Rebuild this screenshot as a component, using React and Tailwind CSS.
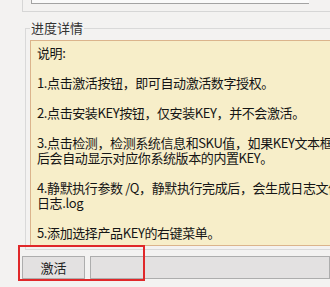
import React from 'react';

const lines = [
  '说明:',
  '',
  '1.点击激活按钮，即可自动激活数字授权。',
  '',
  '2.点击安装KEY按钮，仅安装KEY，并不会激活。',
  '',
  '3.点击检测，检测系统信息和SKU值，如果KEY文本框为空',
  '后会自动显示对应你系统版本的内置KEY。',
  '',
  '4.静默执行参数 /Q，静默执行完成后，会生成日志文件',
  '日志.log',
  '',
  '5.添加选择产品KEY的右键菜单。',
];

const App = () => {
  return (
    <div
      className="relative w-[330px] h-[287px] overflow-hidden bg-[#f3f2f1] text-[#151515]"
      style={{ fontFamily: '"Noto Sans CJK SC", "Noto Sans", sans-serif' }}
    >
      {/* previous group, only its lower edge shows */}
      <div className="h-[12px] pl-[22px]">
        <div className="h-full border-l border-b border-[#d6d6d6] pl-[8px]">
          <div className="w-[278px] h-[4px] border-l border-b border-[#a3a3a3] bg-[#fafafa]" />
        </div>
      </div>

      <fieldset className="ml-[25px] mt-[7px] w-[420px] border-t border-l border-b border-[#d9d9d9] pl-[4px] pt-[3px] pb-[3px]">
        <legend className="px-[1px] text-[13px] leading-[18px] text-[#333]">进度详情</legend>
        <div className="w-[360px] h-[206px] border border-[#dbb48c] bg-[#f7eec9] pl-[6px] pt-[4px] text-[13px] tracking-[-0.4px] leading-[15px]">
          {lines.map((line, i) => (
            <div key={i} className="h-[15px] whitespace-nowrap">
              {line}
            </div>
          ))}
        </div>
      </fieldset>

      <div className="mt-[6px] pl-[22px] flex gap-[5px]">
        <button className="w-[78px] h-[23px] border border-[#adadad] bg-[#e3e1e1] text-[13px] leading-[21px] text-[#222]">
          激活
        </button>
        <button className="w-[300px] h-[23px] border border-[#adadad] bg-[#e3e1e1]" />
      </div>

      {/* red highlight box drawn over the button */}
      <div className="absolute left-[18px] top-[245px] w-[127px] h-[36px] border-2 border-[#e0282a]" />
    </div>
  );
};

export default App;
